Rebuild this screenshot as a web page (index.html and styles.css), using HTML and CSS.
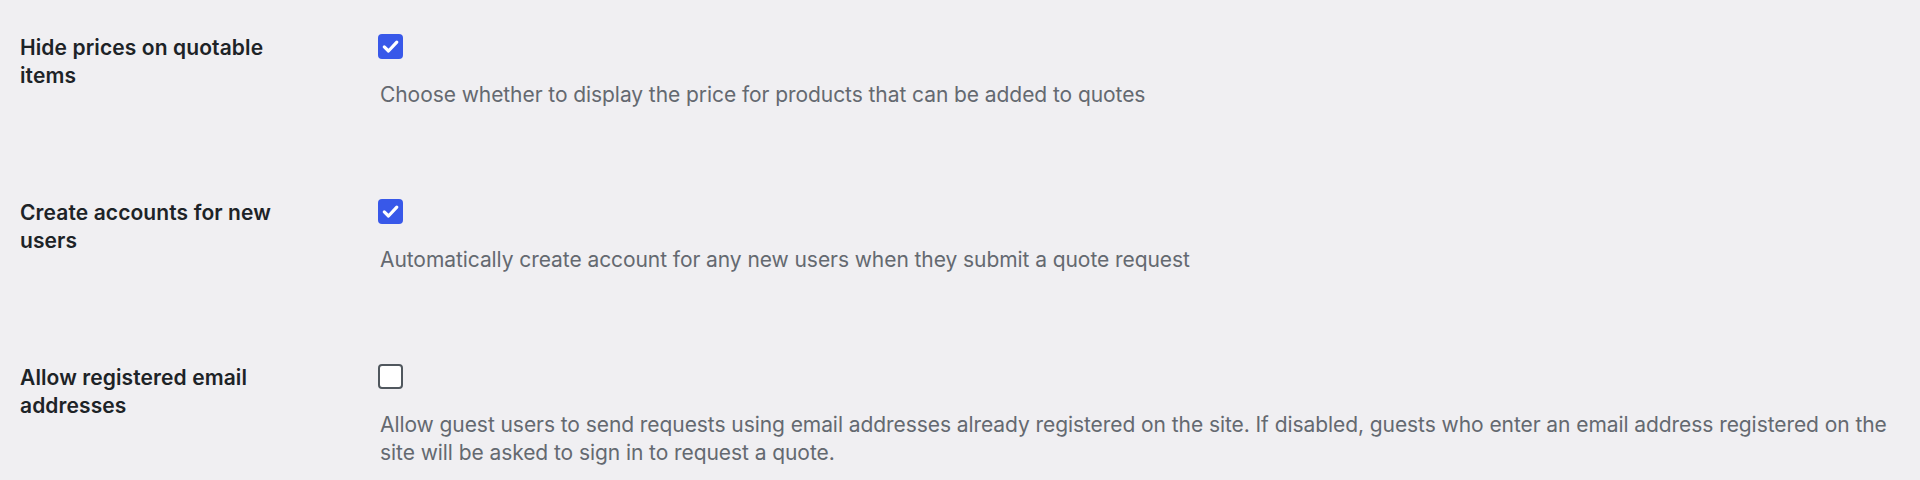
FILE: index.html
```html
<!DOCTYPE html>
<html lang="en">
<head>
  <meta charset="UTF-8">
  <meta name="viewport" content="width=device-width, initial-scale=1.0">
  <title>Quote settings</title>
  <link rel="stylesheet" href="styles.css">
</head>
<body>
  <div class="settings">

    <div class="setting">
      <div class="setting-label">Hide prices on quotable items</div>
      <div class="setting-field">
        <span class="check is-checked" role="checkbox" aria-checked="true">
          <svg viewBox="0 0 25 25" width="25" height="25"><path d="M6.3 12.9 L10.5 17 L18.8 8.2"/></svg>
        </span>
        <p class="description">Choose whether to display the price for products that can be added to quotes</p>
      </div>
    </div>

    <div class="setting">
      <div class="setting-label">Create accounts for new users</div>
      <div class="setting-field">
        <span class="check is-checked" role="checkbox" aria-checked="true">
          <svg viewBox="0 0 25 25" width="25" height="25"><path d="M6.3 12.9 L10.5 17 L18.8 8.2"/></svg>
        </span>
        <p class="description">Automatically create account for any new users when they submit a quote request</p>
      </div>
    </div>

    <div class="setting">
      <div class="setting-label">Allow registered email addresses</div>
      <div class="setting-field">
        <span class="check" role="checkbox" aria-checked="false"></span>
        <p class="description">Allow guest users to send requests using email addresses already registered on the site. If disabled, guests who enter an email address registered on the site will be asked to sign in to request a quote.</p>
      </div>
    </div>

  </div>
</body>
</html>
```

FILE: styles.css
```css
*, *::before, *::after {
  box-sizing: border-box;
}

html {
  background: #f0eff2;
}

body {
  margin: 0;
  font-family: Inter, "Noto Sans", sans-serif;
  font-size: 21px;
  line-height: 28px;
  color: #1d2327;
}

.settings {
  padding: 0 20px;
}

.setting {
  display: grid;
  grid-template-columns: 358px 1fr;
  padding: 34px 0 56px;
}

.setting-label {
  max-width: 300px;
  font-weight: 600;
  letter-spacing: 0.1px;
}

.setting-field {
  display: flex;
  flex-direction: column;
  align-items: flex-start;
}

.check {
  display: block;
  width: 25px;
  height: 25px;
  border: 2px solid #50575e;
  border-radius: 4px;
  background: #fff;
}

.check.is-checked {
  border: 0;
  background: #3858e9;
}

.check svg {
  display: block;
  fill: none;
  stroke: #fff;
  stroke-width: 3.2;
  stroke-linecap: round;
  stroke-linejoin: round;
}

.description {
  margin: 22px 0 0 2px;
  color: #646970;
  letter-spacing: -0.07px;
}
```
